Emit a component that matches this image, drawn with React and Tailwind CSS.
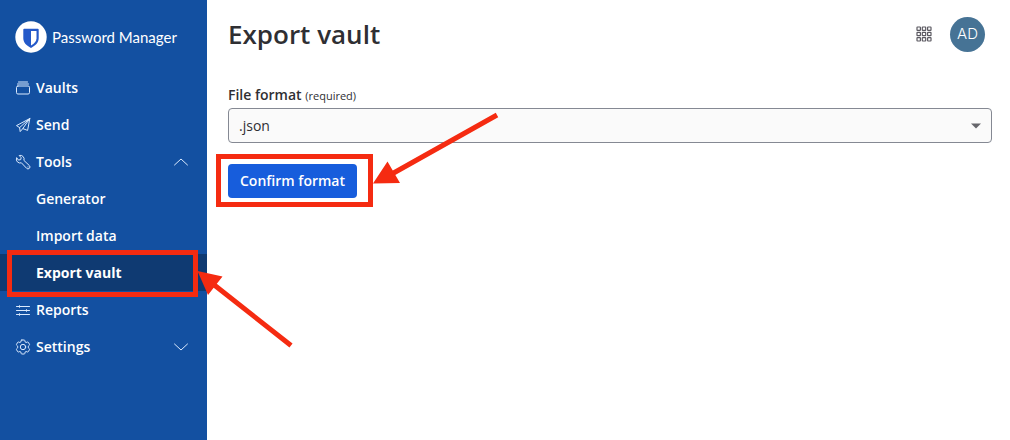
import React from "react";

const line = {
  viewBox: "0 0 16 16",
  fill: "none",
  stroke: "currentColor",
  strokeLinecap: "round",
  strokeLinejoin: "round",
  "aria-hidden": true,
};

function VaultIcon() {
  return (
    <svg {...line} className="size-4 shrink-0 text-blue-100">
      <path d="M3.500 2h9M2.500 4h11" />
      <rect x="1.500" y="6" width="13" height="8" rx="1.400" />
    </svg>
  );
}

function SendIcon() {
  return (
    <svg {...line} className="size-4 shrink-0 text-blue-100">
      <path d="M14.800 1.500 1.500 8.600l3.100 2L14.800 1.500 12.600 13.400 7.800 11.600 14.800 1.500M4.600 10.600l.6 4 2.600-3" />
    </svg>
  );
}

function ToolsIcon() {
  return (
    <svg {...line} className="size-4 shrink-0 text-blue-100">
      <path d="M1.500 4A3.800 3.800 0 0 0 6.400 8.800l5.200 5.500a1.900 1.900 0 0 0 2.800-2.700L8.900 6.400A3.800 3.800 0 0 0 4.200 1.500l2 2.200-.5 1.900-1.900.4z" />
      <path d="M12.900 12.900h.1" />
    </svg>
  );
}

function ReportsIcon() {
  return (
    <svg {...line} className="size-4 shrink-0 text-blue-100">
      <path d="M1.500 4.500h13M1.500 8.500h13M1.500 12.500h13M4.500 3.700v1.600M11.500 7.700v1.600M4.500 11.700v1.600" />
    </svg>
  );
}

function SettingsIcon() {
  return (
    <svg {...line} className="size-4 shrink-0 text-blue-100">
      <path d="M6.800 1h2.400q.5 0 .6.500l.3 1.400 1 .6 1.400-.5q.5-.1.800.3l1.200 2.100q.2.400-.1.800l-1.100 1v1.600l1.100 1q.3.400.1.800l-1.200 2.100q-.3.400-.8.300l-1.400-.5-1 .6-.3 1.400q-.1.500-.6.500H6.800q-.5 0-.6-.5l-.3-1.400-1-.6-1.400.5q-.5.100-.8-.3l-1.200-2.100q-.2-.4.100-.8l1.100-1V7.200l-1.100-1q-.3-.4-.1-.8l1.200-2.100q.3-.4.800-.3l1.400.5 1-.6.300-1.400q.1-.5.600-.5z" />
      <circle cx="8" cy="8" r="2.700" />
    </svg>
  );
}

function Chevron({ up }) {
  return (
    <svg {...line} className="ml-auto size-4 text-blue-100">
      <path d={up ? "M1.500 11 8 5l6.500 6" : "M1.500 5 8 11l6.500-6"} />
    </svg>
  );
}

const row = "relative flex h-[37px] w-full items-center gap-[5px] pr-[18px] text-left";

function NavLink({ icon, children, nested, active }) {
  return (
    <li>
      <a
        href="#"
        aria-current={active ? "page" : undefined}
        className={`${row} ${nested ? "pl-9" : "pl-[15px]"} ${active ? "bg-[#0f3a72] font-bold" : ""}`}
      >
        {icon}
        {children}
        {active && (
          <span className="pointer-events-none absolute -top-1 right-[9px] -bottom-[6px] left-[7px] border-5 border-[#f52b11]" />
        )}
      </a>
    </li>
  );
}

function Sidebar() {
  return (
    <aside className="w-[207px] shrink-0 bg-[#1350a1] text-white">
      <a href="#" className="flex items-center gap-[5px] pt-[21px] pl-[15px]">
        <svg viewBox="0 0 32 32" className="size-8 shrink-0" aria-hidden="true">
          <circle cx="16" cy="16" r="15.700" fill="#fff" />
          <path
            d="M9.200 7.800h13.600q.9 0 .9.900v8.600c0 4.500-3.400 7.400-7.700 9.600-4.300-2.200-7.700-5.100-7.700-9.600V8.700q0-.9.900-.9z"
            fill="#2459c9"
          />
          <path d="M16 10h5.500v7.300c0 3.100-2.100 5.200-5.500 7.200z" fill="#fff" />
        </svg>
        <span className="font-['Lato','Liberation_Sans',sans-serif] text-[15px] leading-6">
          Password Manager
        </span>
      </a>
      <nav aria-label="Main" className="pt-4 text-sm font-semibold">
        <ul>
          <NavLink icon={<VaultIcon />}>Vaults</NavLink>
          <NavLink icon={<SendIcon />}>Send</NavLink>
          <li>
            <button type="button" aria-expanded="true" className={row + " pl-[15px]"}>
              <ToolsIcon />
              Tools
              <Chevron up />
            </button>
            <ul>
              <NavLink nested>Generator</NavLink>
              <NavLink nested>Import data</NavLink>
              <NavLink nested active>
                Export vault
              </NavLink>
            </ul>
          </li>
          <NavLink icon={<ReportsIcon />}>Reports</NavLink>
          <li>
            <button type="button" aria-expanded="false" className={row + " pl-[15px]"}>
              <SettingsIcon />
              Settings
              <Chevron />
            </button>
          </li>
        </ul>
      </nav>
    </aside>
  );
}

function AppsIcon() {
  return (
    <svg viewBox="0 0 16 16" fill="none" stroke="#5b5961" strokeWidth="1.200" className="size-4" aria-hidden="true">
      {[1, 6.3, 11.6].map((y) =>
        [1, 6.3, 11.6].map((x) => (
          <rect key={`${x}-${y}`} x={x} y={y} width="3.400" height="3.400" rx="0.500" />
        ))
      )}
    </svg>
  );
}

function Arrows() {
  return (
    <svg
      className="pointer-events-none absolute top-0 left-0 h-[440px] w-[1010px]"
      viewBox="0 0 1010 440"
      fill="#f52b11"
      stroke="#f52b11"
      aria-hidden="true"
    >
      <path d="M497 115 390 175M291 345.500 213 284" strokeWidth="5" />
      <path d="M373 183.500 387.500 161.500 400 183zM197.500 271 222.500 276.500 208 295z" stroke="none" />
    </svg>
  );
}

export default function App() {
  return (
    <div className="relative flex min-h-screen bg-white font-['Open_Sans','Noto_Sans',sans-serif] text-[#2f2f33]">
      <Sidebar />
      <main className="min-w-0 flex-1 pr-[18px] pl-[21px]">
        <header className="flex items-center justify-between pt-4 pr-[7px]">
          <h1 className="text-[26px] leading-9 font-semibold">Export vault</h1>
          <div className="flex items-center gap-[18px]">
            <button type="button" aria-label="Switch product">
              <AppsIcon />
            </button>
            <button
              type="button"
              aria-label="Account AD"
              className="size-[35px] rounded-full bg-[#467395] font-['Inter','Liberation_Sans',sans-serif] text-[15px] font-light text-white"
            >
              AD
            </button>
          </div>
        </header>
        <form className="pt-[33px]">
          <label htmlFor="format" className="block text-sm leading-5 font-semibold">
            File format <span className="text-[11px] font-normal">(required)</span>
          </label>
          <div className="relative mt-[2px]">
            <select
              id="format"
              defaultValue="json"
              className="block h-[35px] w-full appearance-none rounded border border-[#858993] bg-[#fafafa] px-2.5 text-sm"
            >
              <option value="json">.json</option>
              <option value="csv">.csv</option>
            </select>
            <svg
              viewBox="0 0 10 6"
              className="pointer-events-none absolute top-[15px] right-[11px] h-[6px] w-[10px]"
              fill="#66666b"
              aria-hidden="true"
            >
              <path d="M0 .5h10L5 5.500z" />
            </svg>
          </div>
          <div className="relative mt-[21px] inline-block">
            <button
              type="button"
              className="block h-[34px] rounded bg-[#175ddc] px-3 text-sm font-semibold text-white"
            >
              Confirm format
            </button>
            <span className="pointer-events-none absolute -top-[10px] -right-4 -bottom-[9px] -left-3 border-5 border-[#f52b11]" />
          </div>
        </form>
      </main>
      <Arrows />
    </div>
  );
}
